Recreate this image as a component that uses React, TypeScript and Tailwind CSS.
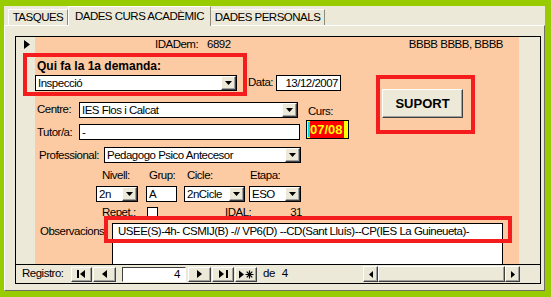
import React from "react";

const raised =
  "border border-t-white border-l-white border-r-[#404040] border-b-[#404040] shadow-[inset_-1px_-1px_0_#a0a0a0]";

function DownArrow() {
  return (
    <svg width="7" height="4" viewBox="0 0 7 4">
      <path d="M0 0h7L3.5 4z" fill="#000" />
    </svg>
  );
}

function Combo({ w, value }: { w: string; value: string }) {
  return (
    <div className={`${w} h-[16px] flex bg-white border border-black`}>
      <span className="flex-1 pl-[2px] leading-[14px] whitespace-nowrap overflow-hidden">
        {value}
      </span>
      <span
        className={`w-[15px] h-[14px] bg-[#ece9d8] flex items-center justify-center ${raised}`}
      >
        <DownArrow />
      </span>
    </div>
  );
}

function Field({ w, value, right }: { w: string; value: string; right?: boolean }) {
  return (
    <div
      className={`${w} h-[16px] bg-white border border-black leading-[14px] px-[2px] whitespace-nowrap overflow-hidden ${
        right ? "text-right" : ""
      }`}
    >
      {value}
    </div>
  );
}

function NavButton({ w, children }: { w: string; children: React.ReactNode }) {
  return (
    <div
      className={`${w} h-[15px] bg-[#ece9d8] flex items-center justify-center ${raised}`}
    >
      {children}
    </div>
  );
}

export default function App() {
  return (
    <div className="w-[551px] h-[297px] bg-[#99cc00] pl-1 pt-[6px] pr-[6px] pb-[6px] font-['Liberation_Sans',Arial,sans-serif] text-[11.5px] tracking-[-0.5px] text-black">
      <div className="h-full bg-[#ece9d8] flex flex-col">
        {/* tabs */}
        <div className="h-[19px] flex items-end pl-[4px]">
          <div className="w-[60px] h-[16px] border-t border-l border-white border-r border-r-[#8c8a7d] leading-[14px] text-center">
            TASQUES
          </div>
          <div className="relative z-10 w-[143px] h-[20px] -mb-px bg-[#ece9d8] border-t border-l border-white border-r border-r-[#8c8a7d] leading-[14px] text-center pt-[2px]">
            DADES CURS ACADÈMIC
          </div>
          <div className="w-[114px] h-[16px] border-t border-white border-r border-r-[#8c8a7d] leading-[14px] text-center">
            DADES PERSONALS
          </div>
        </div>

        {/* tab page */}
        <div className="flex-1 border border-t-white border-l-white border-r-[#716f64] border-b-[#716f64] pl-[10px] pt-[10px] pr-[3px] pb-[6px]">
          <div className="relative w-[526px] h-[248px] border border-black flex flex-col">
            <div className="h-[227px] flex">
              {/* record selector */}
              <div className="w-[19px] bg-[#ece9d8] pl-[8px] pt-[3px]">
                <svg width="6" height="9" viewBox="0 0 6 9">
                  <path d="M0 0L6 4.5L0 9z" fill="#000" />
                </svg>
              </div>

              {/* form body */}
              <div className="w-[484px] bg-[#fccba3] flex flex-col">
                <div className="mt-[1px] h-[12px] flex leading-[12px]">
                  <span className="ml-[120px] w-[52px]">IDADem:</span>
                  <span>6892</span>
                  <span className="ml-auto pr-[16px]">BBBB BBBB, BBBB</span>
                </div>

                <div className="flex">
                  <div className="w-[315px] flex flex-col">
                    <div className="mt-[9px] h-[14px] pl-[2px] leading-[14px] font-bold text-[12px] tracking-normal">
                      Qui fa la 1a demanda:
                    </div>
                    <div className="mt-[1px] flex items-center">
                      <Combo w="w-[202px]" value="Inspecció" />
                      <span className="ml-[11px] w-[28px]">Data:</span>
                      <Field w="w-[65px]" value="13/12/2007" right />
                    </div>
                    <div className="mt-[10px] flex">
                      <div className="w-[266px] flex flex-col">
                        <div className="flex items-center">
                          <span className="w-[44px] pl-[2px]">Centre:</span>
                          <Combo w="w-[219px]" value="IES Flos i Calcat" />
                        </div>
                        <div className="mt-[5px] flex items-center">
                          <span className="w-[44px] pl-[2px]">Tutor/a:</span>
                          <Field w="w-[221px]" value="-" />
                        </div>
                      </div>
                      <div className="ml-[5px] flex flex-col">
                        <span className="mt-[4px] pl-[2px] leading-[12px]">Curs:</span>
                        <div className="mt-[3px] w-[43px] h-[19px] bg-[#ffff00] border border-black flex items-stretch pl-[1px]">
                          <span className="w-[2px] my-[1px] bg-[#00e0e0]" />
                          <span className="bg-[#ff0000] text-[#ffff00] font-bold text-[13px] tracking-normal leading-[17px] pr-[1px]">
                            07/08
                          </span>
                        </div>
                      </div>
                    </div>
                  </div>

                  <div className="ml-[32px] mt-[39px]">
                    <div
                      className={`w-[81px] h-[29px] bg-[#ece9d8] flex items-center justify-center font-bold text-[13px] tracking-normal ${raised}`}
                    >
                      SUPORT
                    </div>
                  </div>
                </div>

                <div className="mt-[6px] flex items-center">
                  <span className="w-[69px] pl-[4px]">Professional:</span>
                  <Combo w="w-[197px]" value="Pedagogo Psico Antecesor" />
                </div>

                <div className="mt-[5px] h-[12px] flex leading-[12px]">
                  <span className="ml-[67px] w-[47px]">Nivell:</span>
                  <span className="w-[38px]">Grup:</span>
                  <span className="w-[63px]">Cicle:</span>
                  <span>Etapa:</span>
                </div>

                <div className="mt-[5px] flex">
                  <div className="ml-[61px]">
                    <Combo w="w-[42px]" value="2n" />
                  </div>
                  <div className="ml-[8px]">
                    <Field w="w-[31px]" value="A" />
                  </div>
                  <div className="ml-[7px]">
                    <Combo w="w-[61px]" value="2nCicle" />
                  </div>
                  <div className="ml-[4px]">
                    <Combo w="w-[52px]" value="ESO" />
                  </div>
                </div>

                <div className="mt-[4px] h-[12px] flex items-center leading-[12px]">
                  <span className="ml-[67px] w-[45px]">Repet.:</span>
                  <span className="w-[11px] h-[11px] bg-white border border-black" />
                  <span className="ml-[67px] w-[77px] flex justify-between">
                    <span>IDAL:</span>
                    <span>31</span>
                  </span>
                </div>

                <div className="mt-[5px] flex">
                  <span className="w-[77px] pl-[5px] pt-[2px] leading-[12px]">Observacions</span>
                  <div className="w-[391px] h-[43px] bg-white border border-black pl-[5px] pt-[1px] leading-[13px] whitespace-nowrap">
                    USEE(S)-4h- CSMIJ(B) -// VP6(D) --CD(Sant Lluís)--CP(IES La Guineueta)-
                  </div>
                </div>
              </div>

              <div className="flex-1 bg-[#ece9d8]" />
            </div>

            {/* navigation bar */}
            <div className="h-[19px] border-t border-black bg-[#ece9d8] flex items-center pl-[6px]">
              <span className="w-[49px]">Registro:</span>
              <NavButton w="w-[21px]">
                <svg width="9" height="8" viewBox="0 0 9 8">
                  <rect x="0" y="0" width="2" height="8" fill="#000" />
                  <path d="M8 0L3 4L8 8z" fill="#000" />
                </svg>
              </NavButton>
              <div className="ml-[1px]">
                <NavButton w="w-[23px]">
                  <svg width="5" height="8" viewBox="0 0 5 8">
                    <path d="M5 0L0 4L5 8z" fill="#000" />
                  </svg>
                </NavButton>
              </div>
              <div className="ml-[6px] w-[64px] h-[15px] bg-white border border-t-[#404040] border-l-[#404040] border-r-white border-b-white leading-[13px] text-right pr-[5px]">
                4
              </div>
              <div className="ml-[2px]">
                <NavButton w="w-[23px]">
                  <svg width="5" height="8" viewBox="0 0 5 8">
                    <path d="M0 0L5 4L0 8z" fill="#000" />
                  </svg>
                </NavButton>
              </div>
              <div className="ml-[1px]">
                <NavButton w="w-[22px]">
                  <svg width="9" height="8" viewBox="0 0 9 8">
                    <path d="M0 0L5 4L0 8z" fill="#000" />
                    <rect x="7" y="0" width="2" height="8" fill="#000" />
                  </svg>
                </NavButton>
              </div>
              <div className="ml-[1px]">
                <NavButton w="w-[22px]">
                  <svg width="15" height="9" viewBox="0 0 15 9">
                    <path d="M0 0.5L5 4.5L0 8.5z" fill="#000" />
                    <path
                      d="M10.5 0.5v8M6.5 4.5h8M7.7 1.7l5.6 5.6M13.3 1.7l-5.6 5.6"
                      stroke="#000"
                      strokeWidth="1.2"
                    />
                  </svg>
                </NavButton>
              </div>
              <span className="ml-[6px]">de</span>
              <span className="ml-[7px]">4</span>

              <div className="ml-auto mr-[20px] flex h-[16px]">
                <div className={`w-[15px] h-[16px] bg-[#ece9d8] flex items-center justify-center ${raised}`}>
                  <svg width="4" height="7" viewBox="0 0 4 7">
                    <path d="M4 0L0 3.5L4 7z" fill="#000" />
                  </svg>
                </div>
                <div className={`w-[127px] h-[16px] bg-[#ece9d8] ${raised}`} />
                <div className={`w-[15px] h-[16px] bg-[#ece9d8] flex items-center justify-center ${raised}`}>
                  <svg width="4" height="7" viewBox="0 0 4 7">
                    <path d="M0 0L4 3.5L0 7z" fill="#000" />
                  </svg>
                </div>
              </div>
            </div>

            {/* red highlight marks */}
            <div className="absolute left-[7px] top-[16px] w-[224px] h-[43px] border-4 border-[#f41c1c]" />
            <div className="absolute left-[360px] top-[38px] w-[99px] h-[59px] border-4 border-[#f41c1c]" />
            <div className="absolute left-[88px] top-[179px] w-[408px] h-[27px] border-4 border-[#f41c1c]" />
          </div>
        </div>
      </div>
    </div>
  );
}
